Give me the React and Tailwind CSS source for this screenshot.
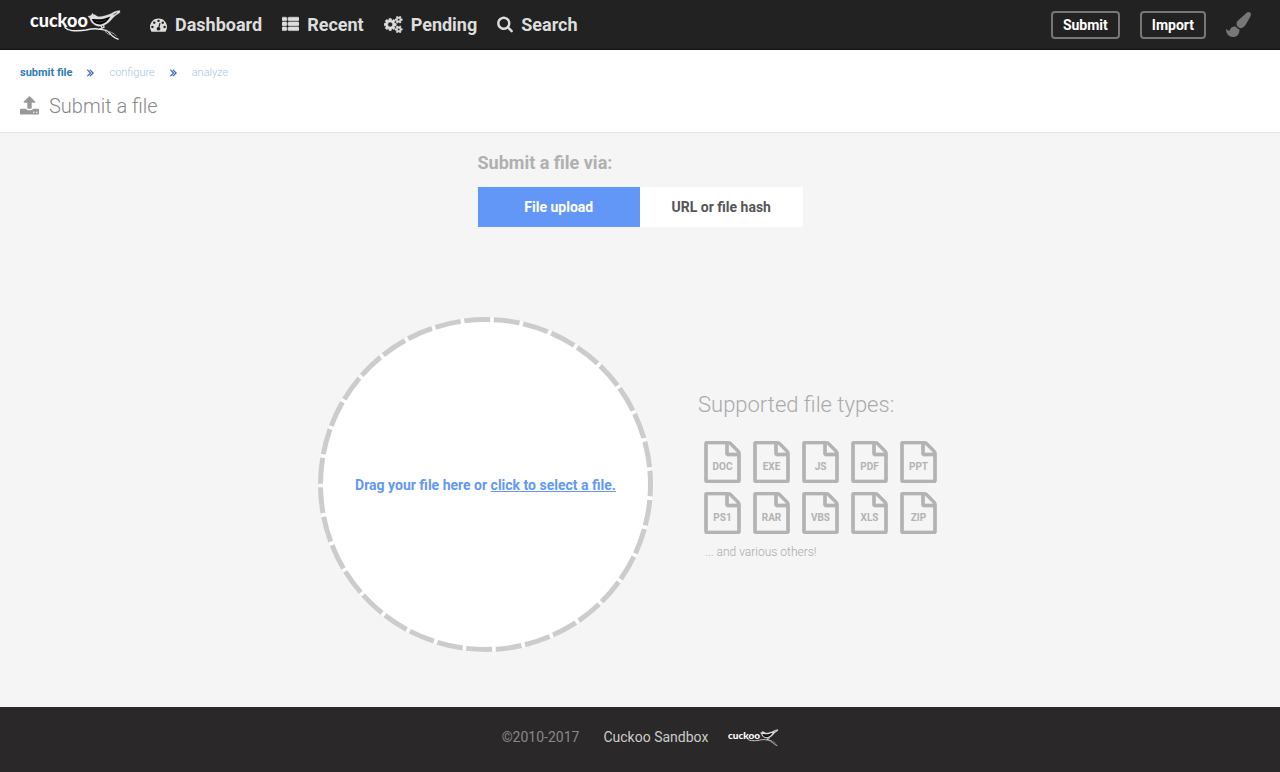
const ICONS = {
  tachometer: {
    box: "0 0 1792 1792",
    d: "M384 1152q0-53-37.5-90.5t-90.5-37.5-90.5 37.5-37.5 90.5 37.5 90.5 90.5 37.5 90.5-37.5 37.5-90.5zm192-448q0-53-37.5-90.5t-90.5-37.5-90.5 37.5-37.5 90.5 37.5 90.5 90.5 37.5 90.5-37.5 37.5-90.5zm428 481l101-382q6-26-7.5-48.5t-38.5-29.5-48 6.5-30 39.5l-101 382q-60 5-107 43.5t-63 98.5q-20 77 20 146t117 89 146-20 89-117q16-60-6-117t-72-91zm660-33q0-53-37.5-90.5t-90.5-37.5-90.5 37.5-37.5 90.5 37.5 90.5 90.5 37.5 90.5-37.5 37.5-90.5zm-640-640q0-53-37.5-90.5t-90.5-37.5-90.5 37.5-37.5 90.5 37.5 90.5 90.5 37.5 90.5-37.5 37.5-90.5zm448 192q0-53-37.5-90.5t-90.5-37.5-90.5 37.5-37.5 90.5 37.5 90.5 90.5 37.5 90.5-37.5 37.5-90.5zm320 448q0 261-141 483-19 29-54 29h-1402q-35 0-54-29-141-221-141-483 0-182 71-348t191-286 286-191 348-71 348 71 286 191 191 286 71 348z",
  },
  list: {
    box: "0 0 1792 1792",
    d: "M512 1248v192q0 40-28 68t-68 28h-320q-40 0-68-28t-28-68v-192q0-40 28-68t68-28h320q40 0 68 28t28 68zm0-512v192q0 40-28 68t-68 28h-320q-40 0-68-28t-28-68v-192q0-40 28-68t68-28h320q40 0 68 28t28 68zm1280 512v192q0 40-28 68t-68 28h-960q-40 0-68-28t-28-68v-192q0-40 28-68t68-28h960q40 0 68 28t28 68zm-1280-1024v192q0 40-28 68t-68 28h-320q-40 0-68-28t-28-68v-192q0-40 28-68t68-28h320q40 0 68 28t28 68zm1280 512v192q0 40-28 68t-68 28h-960q-40 0-68-28t-28-68v-192q0-40 28-68t68-28h960q40 0 68 28t28 68zm0-512v192q0 40-28 68t-68 28h-960q-40 0-68-28t-28-68v-192q0-40 28-68t68-28h960q40 0 68 28t28 68z",
  },
  search: {
    box: "64 64 1664 1792",
    d: "M1216 832q0-185-131.5-316.5t-316.5-131.5-316.5 131.5-131.5 316.5 131.5 316.5 316.5 131.5 316.5-131.5 131.5-316.5zm512 832q0 52-38 90t-90 38q-54 0-90-38l-343-342q-179 124-399 124-143 0-273.5-55.5t-225-150-150-225-55.5-273.5 55.5-273.5 150-225 225-150 273.5-55.5 273.5 55.5 225 150 150 225 55.5 273.5q0 220-124 399l343 343q37 37 37 90z",
  },
  upload: {
    box: "64 64 1664 1792",
    d: "M1344 1472q0-26-19-45t-45-19-45 19-19 45 19 45 45 19 45-19 19-45zm256 0q0-26-19-45t-45-19-45 19-19 45 19 45 45 19 45-19 19-45zm128-224v320q0 40-28 68t-68 28h-1472q-40 0-68-28t-28-68v-320q0-40 28-68t68-28h427q21 56 70.5 92t110.5 36h256q61 0 110.5-36t70.5-92h427q40 0 68 28t28 68zm-325-648q-17 40-59 40h-256v448q0 26-19 45t-45 19h-256q-26 0-45-19t-19-45v-448h-256q-42 0-59-40-17-39 14-69l448-448q18-19 45-19t45 19l448 448q31 30 14 69z",
  },
  brush: {
    box: "0 0 1792 1792",
    d: "M1615 0q70 0 122.5 46.5t52.5 116.5q0 63-45 151-332 629-465 752-97 91-218 91-126 0-216.5-92.5t-90.5-219.5q0-128 92-212l638-579q59-54 130-54zm-909 1034q39 76 106.5 130t150.5 76l1 71q4 213-129.5 347t-348.5 134q-123 0-218-46.5t-152.5-127.5-86.5-183-29-220q7 5 41 30t62 44.5 59 36.5 46 17q41 0 55-37 25-66 57.5-112.5t69.5-76 88-47.5 103-25.5 125-10.5z",
  },
  angles: {
    box: "256 64 1280 1792",
    d: "M979 960q0 13-10 23l-466 466q-10 10-23 10t-23-10l-50-50q-10-10-10-23t10-23l393-393-393-393q-10-10-10-23t10-23l50-50q10-10 23-10t23 10l466 466q10 10 10 23zm384 0q0 13-10 23l-466 466q-10 10-23 10t-23-10l-50-50q-10-10-10-23t10-23l393-393-393-393q-10-10-10-23t10-23l50-50q10-10 23-10t23 10l466 466q10 10 10 23z",
  },
  file: {
    box: "128 0 1536 1792",
    d: "M1596 380q28 28 48 76t20 88v1152q0 40-28 68t-68 28h-1344q-40 0-68-28t-28-68v-1600q0-40 28-68t68-28h896q40 0 88 20t76 48zm-444-244v376h376q-10-29-22-41l-313-313q-12-12-41-22zm384 1528v-1024h-416q-40 0-68-28t-28-68v-416h-768v1536h1280z",
  },
};

function Icon({ name, className }) {
  const icon = ICONS[name];
  return (
    <svg viewBox={icon.box} fill="currentColor" stroke="currentColor" className={className} aria-hidden="true">
      <path d={icon.d} />
    </svg>
  );
}

const SMALL_COG =
  "M1600 1408q0-52-38-90t-90-38-90 38-38 90q0 53 37.5 90.5t90.5 37.5 90.5-37.5 37.5-90.5zM1856 1338v140q0 16-149 31-12 27-30 52 51 113 51 138 0 4-4 7-122 71-124 71-8 0-46-47t-52-68q-20 2-30 2t-30-2q-14 21-52 68t-46 47q-2 0-124-71-4-3-4-7 0-25 51-138-18-25-30-52-149-15-149-31v-140q0-16 149-31 13-29 30-52-51-113-51-138 0-4 4-7 4-2 35-20t59-34 30-16q8 0 46 46.5t52 67.5q20-2 30-2t30 2q51-71 92-112l6-2q4 0 124 70 4 3 4 7 0 25-51 138 17 23 30 52 149 15 149 31z";

function Cogs({ className }) {
  return (
    <svg viewBox="-32 0 1920 1792" fill="currentColor" fillRule="evenodd" stroke="currentColor" strokeWidth="60" className={className} aria-hidden="true">
      <path d="M832 896q0-106-75-181t-181-75-181 75-75 181 75 181 181 75 181-75 75-181zM1216 805v185q0 10-7 19.5t-16 10.5l-155 24q-11 35-32 76 34 48 90 115 7 11 7 20 0 12-7 19-23 30-82.5 89.5t-78.5 59.5q-11 0-21-7l-115-90q-37 19-77 31-11 108-23 155-7 24-30 24h-186q-11 0-20-7.5t-10-17.5l-23-153q-34-10-75-31l-118 89q-7 7-20 7-11 0-21-8-144-133-144-160 0-9 7-19 10-14 41-53t47-61q-23-44-35-82l-152-24q-10-1-17-9.5t-7-19.5v-185q0-10 7-19.5t16-10.5l155-24q11-35 32-76-34-48-90-115-7-11-7-20 0-12 7-20 22-30 82-89t79-59q11 0 21 7l115 90q34-18 77-32 11-108 23-154 7-24 30-24h186q11 0 20 7.5t10 17.5l23 153q34 10 75 31l118-89q8-7 20-7 11 0 21 8 144 133 144 160 0 8-7 19-12 16-42 54t-45 60q23 48 34 82l152 23q10 2 17 10.5t7 19.5z" />
      <path d={SMALL_COG} />
      <path d={SMALL_COG} transform="translate(0 -1024)" />
    </svg>
  );
}

function Logo({ className }) {
  return (
    <svg viewBox="0 0 90 30" className={"overflow-visible " + className} role="img" aria-label="cuckoo">
      <path d="M35 17.4C36.5 19 38.5 20.2 42 20.6C47 21 52 20.8 56 20C60 19.1 64 18.2 68 19C71 19.5 73 19.6 76 20.4C79 21.3 80 24 82.5 26C84.5 27.8 86 28.4 88 29.2" fill="none" stroke="#eee" strokeWidth="1.4" strokeLinecap="round" />
      <path d="M76.5 21C80 21.6 83.5 22.6 86.5 26.2M75 20.4C75.5 22.6 77.6 24.2 80 24.6" fill="none" stroke="#aaa" strokeWidth="0.9" />
      <path d="M57.8 6.4L61 5.4L62.4 3.2L63.6 4.6L65.4 5C67 7 70 7.2 74 6C78 5 80 4.2 83 2.4C85.6 1.2 88 0.7 90 0.6L89.8 2.8C87 4.4 84.6 6 82.4 8.6C79.6 12 76 15.4 70.8 16.2C65.6 16.6 61 13.4 59.8 8.2Z" fill="#ddd" stroke="#ddd" strokeWidth="0.3" />
      <path d="M62 9C64 8.6 67 9.8 71 9.2C75 8.6 77.6 7.4 80.4 6.4C78.6 9.8 75.4 13.4 70.6 14.4C66 14.6 62.8 12.6 62 9Z" fill="#050505" />
      <path d="M66 11.6C69 12.4 73 11.6 76.2 9.6M83.4 4.8L87 2.6" fill="none" stroke="#444" strokeWidth="0.8" />
      <path d="M71 15.4L72.4 19.4M73.6 14.8L74 17.4L69.6 19.2" fill="none" stroke="#ddd" strokeWidth="1.3" />
      <text x="0" y="17" fontSize="18" fontWeight="900" fill="#fff" className="font-[Lato,sans-serif]">
        cuckoo
      </text>
    </svg>
  );
}

const NAV = [
  ["Dashboard", "tachometer"],
  ["Recent", "list"],
  ["Pending", "cogs"],
  ["Search", "search"],
];

const FILE_TYPES = ["DOC", "EXE", "JS", "PDF", "PPT", "PS1", "RAR", "VBS", "XLS", "ZIP"];

function NavIcon({ name }) {
  if (name === "cogs") return <Cogs className="h-[17px] w-[19px]" />;
  if (name === "search") return <Icon name="search" className="h-[17px] w-4" />;
  if (name === "list") return <Icon name="list" className="size-[17px] stroke-[60px]" />;
  return <Icon name={name} className="size-[17px]" />;
}

function Header() {
  return (
    <header className="flex h-[50px] items-center border-b border-[#101010] bg-[#222] pr-[29px] pl-[30px]">
      <a href="#home" className="mr-[30px]">
        <Logo className="h-[30px] w-[90px]" />
      </a>
      <nav className="flex items-center gap-5">
        {NAV.map(([label, icon]) => (
          <a key={label} href={"#" + label.toLowerCase()} className="flex items-center gap-2 text-lg leading-5 font-bold text-[#ddd]">
            <NavIcon name={icon} />
            {label}
          </a>
        ))}
      </nav>
      <div className="ml-auto flex items-center gap-5">
        <button type="button" className="h-7 rounded-[4px] border-2 border-[#777] px-[10px] text-sm font-bold text-white">
          Submit
        </button>
        <button type="button" className="h-7 rounded-[4px] border-2 border-[#777] px-[10px] text-sm font-bold text-white">
          Import
        </button>
        <button type="button" aria-label="Change theme" className="text-[#777]">
          <Icon name="brush" className="size-[25px]" />
        </button>
      </div>
    </header>
  );
}

function TitleBar() {
  return (
    <section className="border-b border-[#e7e7e7] bg-white px-5 pt-[15px] pb-[13px]">
      <ol className="flex items-center gap-[14px] text-[11px] leading-4">
        <li className="font-bold text-[#337ab7]">submit file</li>
        <li className="text-[#2f5fb0]"><Icon name="angles" className="h-3 w-[9px] stroke-[50px]" /></li>
        <li className="font-light text-[#a5c6e3]">configure</li>
        <li className="text-[#2f5fb0]"><Icon name="angles" className="h-3 w-[9px] stroke-[50px]" /></li>
        <li className="font-light text-[#a5c6e3]">analyze</li>
      </ol>
      <h1 className="mt-3 flex items-center gap-[10px] text-xl leading-[26px] font-light text-[#888]">
        <Icon name="upload" className="h-[21px] w-[19px] text-[#999]" />
        Submit a file
      </h1>
    </section>
  );
}

function DropZone() {
  return (
    <div className="relative flex size-[335px] items-center justify-center">
      <svg viewBox="0 0 335 335" className="absolute inset-0 size-full" aria-hidden="true">
        <circle cx="167.5" cy="167.5" r="167" fill="#fff" />
        <circle cx="167.5" cy="167.5" r="165" fill="none" stroke="#ccc" strokeWidth="5" strokeDasharray="26 3.62" strokeDashoffset="14.2" />
      </svg>
      <label className="relative cursor-pointer text-sm font-bold text-[#6297f7]">
        Drag your file here or <span className="underline">click to select a file.</span>
        <input type="file" className="sr-only" />
      </label>
    </div>
  );
}

export default function App() {
  return (
    <div className="flex min-h-screen flex-col bg-[#f5f5f5] font-[Roboto,sans-serif]">
      <Header />
      <TitleBar />
      <main className="flex-1 pt-[17px] pb-[54px]">
        <section className="mx-auto w-[325px]">
          <h2 className="text-lg leading-[26px] font-bold text-[#b0b0b0]">Submit a file via:</h2>
          <div className="mt-[11px] grid grid-cols-2 text-sm font-bold">
            <button type="button" className="h-10 bg-[#6297f7] text-white">File upload</button>
            <button type="button" className="h-10 bg-white text-[#555]">URL or file hash</button>
          </div>
        </section>
        <section className="mt-[90px] flex items-center justify-center gap-[45px]">
          <DropZone />
          <div className="w-[264px] pb-[19px]">
            <h3 className="text-[22px] leading-[30px] font-light text-[#aaa]">Supported file types:</h3>
            <ul className="mt-[21px] ml-[6px] grid w-[233px] grid-cols-5 gap-x-3 gap-y-[9px]">
              {FILE_TYPES.map((type) => (
                <li key={type} className="relative flex h-[42px] w-[37px] items-center justify-center text-[#b3b3b3]">
                  <Icon name="file" className="absolute inset-0 size-full stroke-[30px]" />
                  <span className="relative pt-[10px] text-[10px] leading-4 font-bold">{type}</span>
                </li>
              ))}
            </ul>
            <p className="mt-[10px] ml-[7px] text-xs leading-4 font-light text-[#aaa]">... and various others!</p>
          </div>
        </section>
      </main>
      <footer className="flex h-[65px] items-center justify-center bg-[#2a2829] pb-[5px] text-sm">
        <span className="mr-6 text-[#888]">©2010-2017</span>
        <a href="#sandbox" className="mr-5 text-[#ccc]">Cuckoo Sandbox</a>
        <Logo className="h-[17px] w-[50px]" />
      </footer>
    </div>
  );
}
